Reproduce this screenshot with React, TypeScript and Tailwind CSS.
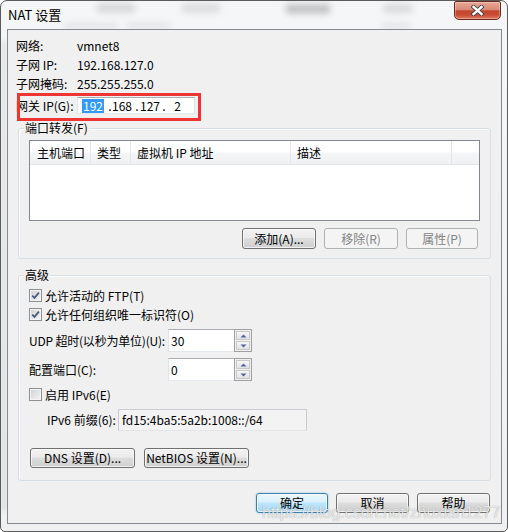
import type { ReactNode } from "react";

function Btn({
  children,
  className = "",
  disabled = false,
  primary = false,
}: {
  children: ReactNode;
  className?: string;
  disabled?: boolean;
  primary?: boolean;
}) {
  const look = disabled
    ? "border-[#adb2b5] bg-[#f4f4f4] text-[#838383]"
    : primary
      ? "border-[#3c7fb1] bg-[linear-gradient(#eaf6fd_0%,#d9f0fc_45%,#bee6fd_50%,#a7d9f5_100%)] shadow-[inset_0_0_0_1px_rgba(255,255,255,0.75),0_0_2px_rgba(60,160,230,0.6)] text-black"
      : "border-[#707070] bg-[linear-gradient(#f2f2f2_0%,#ebebeb_45%,#dddddd_50%,#cfcfcf_100%)] shadow-[inset_0_0_0_1px_rgba(255,255,255,0.7)] text-black";
  return (
    <div
      className={`flex shrink-0 items-center justify-center rounded-[3px] border leading-[16px] whitespace-nowrap ${look} ${className}`}
    >
      {children}
    </div>
  );
}

function Check({ checked = false }: { checked?: boolean }) {
  return (
    <span className="flex h-[13px] w-[13px] shrink-0 items-center justify-center border border-[#8e8f8f] bg-[linear-gradient(135deg,#cfd1d4,#f6f6f6)] shadow-[inset_0_0_0_1px_#f4f4f4]">
      {checked && (
        <svg width="9" height="9" viewBox="0 0 9 9">
          <path
            d="M1.2 4.6 L3.5 6.9 L7.9 1.6"
            stroke="#4a5880"
            strokeWidth="1.7"
            fill="none"
          />
        </svg>
      )}
    </span>
  );
}

function SpinBox({ value }: { value: string }) {
  return (
    <div className="flex h-[23px] w-[84px] shrink-0">
      <div className="flex flex-1 items-center border border-[#abadb3] border-r-0 border-b-[#e3e9ef] border-l-[#e2e3ea] bg-white pl-[2px]">
        {value}
      </div>
      <div className="flex w-[18px] flex-col gap-[1px] border border-[#a0a0a0] bg-[#f0f0f0] p-[1px]">
        <span className="flex flex-1 items-center justify-center border border-[#c8c8c8] bg-[linear-gradient(#f6f6f6,#e2e2e6)]">
          <svg width="7" height="4" viewBox="0 0 7 4">
            <path d="M0.5 3.5 L3.5 0.5 L6.5 3.5 Z" fill="#4f64a0" />
          </svg>
        </span>
        <span className="flex flex-1 items-center justify-center border border-[#c8c8c8] bg-[linear-gradient(#f6f6f6,#e2e2e6)]">
          <svg width="7" height="4" viewBox="0 0 7 4">
            <path d="M0.5 0.5 L3.5 3.5 L6.5 0.5 Z" fill="#4f64a0" />
          </svg>
        </span>
      </div>
    </div>
  );
}

const info = [
  { label: "网络:", value: "vmnet8" },
  { label: "子网 IP:", value: "192.168.127.0" },
  { label: "子网掩码:", value: "255.255.255.0" },
];

const columns = [
  { title: "主机端口", w: "w-[61px] pl-[7px]" },
  { title: "类型", w: "w-[40px] pl-[6px]" },
  { title: "虚拟机 IP 地址", w: "w-[160px] pl-[6px]" },
  { title: "描述", w: "w-[161px] pl-[6px]" },
];

export default function App() {
  return (
    <div className="h-[532px] w-[508px] bg-white font-['Noto_Sans_CJK_SC','Noto_Sans',sans-serif] text-[12px] leading-[16px] text-black">
      <div className="relative flex h-[532px] w-[508px] flex-col overflow-hidden rounded-t-[7px] rounded-b-[5px] border border-[#5b5b5b] bg-[linear-gradient(#f5f6f8,#eef0f2)]">
        {/* what shows through the glass frame */}
        <div className="absolute top-[2px] left-[95px] h-[10px] w-[40px] rounded-full bg-[#9a9a9a] opacity-30 blur-[3px]" />
        <div className="absolute top-[2px] left-[180px] h-[10px] w-[40px] rounded-full bg-[#9a9a9a] opacity-25 blur-[3px]" />
        <div className="absolute top-[3px] left-[284px] h-[10px] w-[46px] rounded-full bg-[#8a8a8a] opacity-45 blur-[3px]" />
        <div className="absolute top-[3px] left-[382px] h-[9px] w-[30px] rounded-full bg-[#9a9a9a] opacity-30 blur-[3px]" />
        <div className="absolute top-[22px] left-[62px] h-[6px] w-[55px] rounded-full bg-[#9a9a9a] opacity-20 blur-[3px]" />
        <div className="absolute top-[22px] left-[125px] h-[6px] w-[45px] rounded-full bg-[#9a9a9a] opacity-20 blur-[3px]" />
        <div className="absolute top-[22px] left-[380px] h-[6px] w-[30px] rounded-full bg-[#9a9a9a] opacity-20 blur-[3px]" />
        <div className="absolute top-[40px] left-[1px] h-[470px] w-[4px] bg-[#a0a0a0] opacity-25 blur-[2px]" />

        {/* title bar */}
        <div className="relative flex h-[28px] shrink-0 items-start justify-between">
          <span className="mt-[6px] ml-[7px] text-[13px] leading-[16px]">
            NAT 设置
          </span>
          <div className="mr-[6px] flex h-[19px] w-[47px] items-center justify-center rounded-t-[2px] rounded-b-[5px] border border-[#6b2a20] bg-[linear-gradient(#e9a696_0%,#d98a78_45%,#c4452e_52%,#c84a32_75%,#df7d60_100%)] shadow-[inset_0_0_0_1px_rgba(255,255,255,0.3)]">
            <svg width="13" height="11" viewBox="0 0 13 11">
              <path
                d="M2.5 2 L10.5 9 M10.5 2 L2.5 9"
                stroke="#3d3d3d"
                strokeWidth="4.2"
                strokeLinecap="square"
              />
              <path
                d="M2.5 2 L10.5 9 M10.5 2 L2.5 9"
                stroke="#ffffff"
                strokeWidth="2.4"
                strokeLinecap="square"
              />
            </svg>
          </div>
        </div>

        {/* client area */}
        <div className="relative mr-[5px] mb-[7px] ml-[6px] flex flex-1 flex-col border border-[#858a90] bg-[#f0f0f0]">
          <div className="flex flex-col pt-[6px] pl-[8px]">
            {info.map((r) => (
              <div key={r.label} className="flex h-[19px] items-center">
                <span className="w-[61px] shrink-0 whitespace-nowrap">{r.label}</span>
                <span>{r.value}</span>
              </div>
            ))}
            <div className="mt-[4px] flex h-[17px] items-center">
              <span className="w-[61px] shrink-0 whitespace-nowrap">网关 IP(G):</span>
              <div className="flex h-[17px] w-[118px] items-center border border-[#abadb3] border-b-[#e3e9ef] border-l-[#e2e3ea] border-r-[#dbdfe6] bg-white pl-[4px] leading-[14px]">
                <span className="flex w-[22px] justify-center">
                  <span className="bg-[#3399ff] px-[1px] text-white">192</span>
                </span>
                <span className="ml-[4px] flex w-[4px] justify-center">.</span>
                <span className="flex w-[20px] justify-center">168</span>
                <span className="ml-[3px] flex w-[4px] justify-center">.</span>
                <span className="ml-[1px] flex w-[20px] justify-center">127</span>
                <span className="ml-[2px] flex w-[4px] justify-center">.</span>
                <span className="ml-[4px] flex w-[15px] justify-center">2</span>
              </div>
            </div>
          </div>

          {/* 端口转发 */}
          <div className="mx-[10px] mt-[14px] flex flex-col rounded-[3px] border border-[#d5dfe5] shadow-[inset_1px_1px_0_#ffffff]">
            <span className="-mt-[9px] ml-[5px] w-fit bg-[#f0f0f0] px-[1px] leading-[16px]">
              端口转发(F)
            </span>
            <div className="mx-[10px] mt-[4px] flex h-[81px] flex-col border border-[#828790] bg-white">
              <div className="flex h-[24px] border-b border-[#e3e5e8] bg-[linear-gradient(#ffffff_0%,#ffffff_45%,#f4f5f7_55%,#eff1f3_100%)]">
                {columns.map((c) => (
                  <div
                    key={c.title}
                    className={`flex items-center border-r border-[#e3e5e8] whitespace-nowrap ${c.w}`}
                  >
                    {c.title}
                  </div>
                ))}
                <div className="flex-1" />
              </div>
            </div>
            <div className="mt-[7px] mr-[12px] flex justify-end gap-[8px] pb-[9px]">
              <Btn className="h-[21px] w-[74px]">添加(A)...</Btn>
              <Btn className="h-[21px] w-[74px]" disabled>
                移除(R)
              </Btn>
              <Btn className="h-[21px] w-[72px]" disabled>
                属性(P)
              </Btn>
            </div>
          </div>

          {/* 高级 */}
          <div className="mx-[10px] mt-[16px] flex flex-col rounded-[3px] border border-[#d5dfe5] pb-[12px] pl-[10px] shadow-[inset_1px_1px_0_#ffffff]">
            <span className="-mt-[9px] -ml-[5px] w-fit bg-[#f0f0f0] px-[1px] leading-[16px]">
              高级
            </span>
            <div className="mt-[3px] flex h-[19px] items-center gap-[3px]">
              <Check checked />
              <span>允许活动的 FTP(T)</span>
            </div>
            <div className="flex h-[19px] items-center gap-[3px]">
              <Check checked />
              <span>允许任何组织唯一标识符(O)</span>
            </div>
            <div className="mt-[5px] flex h-[23px] items-center">
              <span className="w-[139px] shrink-0 tracking-[-0.2px] whitespace-nowrap">
                UDP 超时(以秒为单位)(U):
              </span>
              <SpinBox value="30" />
            </div>
            <div className="mt-[6px] flex h-[23px] items-center">
              <span className="w-[139px] shrink-0 whitespace-nowrap">配置端口(C):</span>
              <SpinBox value="0" />
            </div>
            <div className="mt-[4px] flex h-[19px] items-center gap-[3px]">
              <Check />
              <span>启用 IPv6(E)</span>
            </div>
            <div className="mt-[5px] ml-[18px] flex h-[22px] items-center">
              <span className="w-[71px] shrink-0 whitespace-nowrap">IPv6 前缀(6):</span>
              <div className="flex h-[22px] w-[189px] items-center border border-[#c9ccd0] border-b-[#e3e5e8] bg-[#f3f3f3] pl-[3px]">
                fd15:4ba5:5a2b:1008::/64
              </div>
            </div>
            <div className="mt-[17px] ml-[1px] flex gap-[9px]">
              <Btn className="h-[20px] w-[105px]">DNS 设置(D)...</Btn>
              <Btn className="h-[20px] w-[105px]">NetBIOS 设置(N)...</Btn>
            </div>
          </div>

          <div className="mt-[12px] mr-[11px] flex justify-end gap-[8px]">
            <Btn className="h-[20px] w-[72px]" primary>
              确定
            </Btn>
            <Btn className="h-[20px] w-[73px]">取消</Btn>
            <Btn className="h-[20px] w-[73px]">帮助</Btn>
          </div>
        </div>

        {/* annotation + watermark laid over the screenshot */}
        <div className="absolute top-[92px] left-[16px] h-[28px] w-[184px] border-[3px] border-[#ef3434]" />
        <span className="absolute top-[503px] left-[261px] font-['Liberation_Sans',sans-serif] text-[16px] leading-[18px] whitespace-nowrap text-white/80 [text-shadow:0_0_1px_rgba(0,0,0,0.45)]">
          https://blog.csdn.net/zhuxian1277
        </span>
      </div>
    </div>
  );
}
